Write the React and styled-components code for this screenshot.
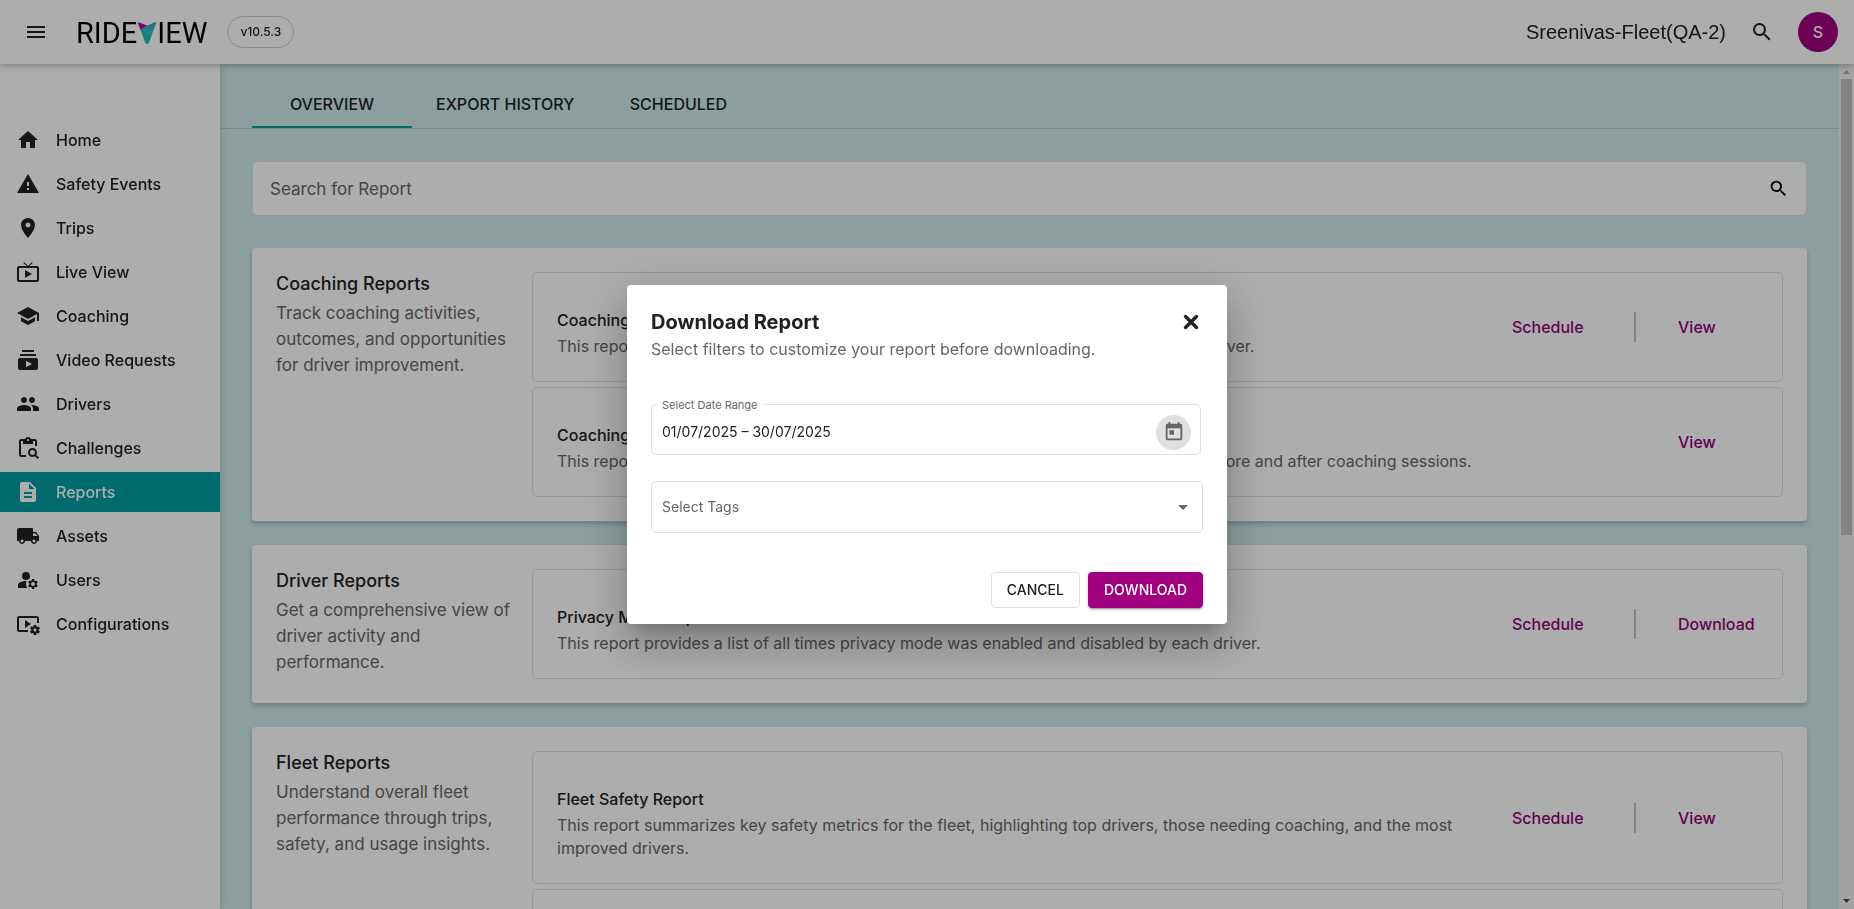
import React from "react";
import styled, { createGlobalStyle, css } from "styled-components";
import {
  MdMenu, MdSearch, MdHome, MdWarning, MdLocationOn, MdLiveTv, MdSchool,
  MdSubscriptions, MdPeople, MdContentPasteSearch, MdDescription,
  MdLocalShipping, MdManageAccounts, MdVideoSettings, MdToday, MdArrowDropDown,
} from "react-icons/md";

const color = {
  teal: "#009c9f",
  pale: "#ceebeb",
  purple: "#a00080",
  link: "#940076",
  text: "#212121",
  muted: "#666666",
  line: "#e0e0e0",
};

const GlobalStyle = createGlobalStyle`
  *, *::before, *::after { box-sizing: border-box; }
  body {
    margin: 0;
    color: ${color.text};
    font-family: Inter, "Liberation Sans", sans-serif;
    font-size: 16px;
    line-height: 24px;
  }
  button, input, select { font: inherit; color: inherit; }
  h1, h2, h3, p { margin: 0; }
`;

const Page = styled.div`
  display: flex;
  flex-direction: column;
  height: 100vh;
  overflow: hidden;
`;

const Header = styled.header`
  position: relative;
  z-index: 2;
  flex: none;
  display: flex;
  align-items: center;
  height: 64px;
  padding: 0 16px 0 24px;
  background: #fff;
  box-shadow: 0 2px 6px rgba(0, 0, 0, 0.25);
`;

const IconButton = styled.button`
  display: grid;
  place-items: center;
  width: ${(p) => p.$size || 24}px;
  height: ${(p) => p.$size || 24}px;
  padding: 0;
  border: 0;
  border-radius: 50%;
  background: ${(p) => p.$fill || "transparent"};
  color: ${(p) => p.$ink || color.text};
  cursor: pointer;
`;

const Logo = styled.a`
  display: flex;
  align-items: center;
  margin-left: 28px;
  padding-top: 2px;
  color: #000;
  font-family: Roboto, sans-serif;
  font-size: 29px;
  font-weight: 400;
  line-height: 32px;
  text-decoration: none;
`;

const Version = styled.span`
  height: 32px;
  margin-left: 20px;
  padding: 0 12px;
  border: 1px solid #cfcfcf;
  border-radius: 16px;
  font-size: 12px;
  font-weight: 500;
  line-height: 30px;
`;

const Account = styled.div`
  display: flex;
  align-items: center;
  gap: 24px;
  margin-left: auto;
`;

const FleetName = styled.span`
  font-family: "Liberation Sans", Arial, sans-serif;
  font-size: 20px;
`;

const Avatar = styled.button`
  width: 40px;
  height: 40px;
  padding: 0;
  border: 0;
  border-radius: 50%;
  background: ${color.purple};
  color: #fff;
  font-weight: 500;
`;

const Body = styled.div`
  flex: 1;
  min-height: 0;
  display: flex;
`;

const Sidebar = styled.nav`
  position: relative;
  z-index: 1;
  flex: none;
  display: flex;
  flex-direction: column;
  gap: 4px;
  width: 220px;
  padding-top: 56px;
  background: #fff;
  box-shadow: 1px 0 6px rgba(0, 0, 0, 0.16);
`;

const NavItem = styled.a`
  display: flex;
  align-items: center;
  gap: 16px;
  height: 40px;
  padding: 0 16px;
  font-weight: 500;
  text-decoration: none;
  color: ${color.text};
  ${(p) => p.$active && css`
    background: ${color.teal};
    color: #fff;
  `}
`;

const Main = styled.main`
  flex: 1;
  min-width: 0;
  overflow: auto;
  scrollbar-width: none;
  background: ${color.pale};
`;

const Tabs = styled.div`
  display: flex;
  padding: 16px 32px 0;
  border-bottom: 1px solid #b7cccc;
`;

const Tab = styled.button`
  min-width: 160px;
  height: 48px;
  padding: 0 24px;
  border: 0;
  background: none;
  font-weight: 500;
  box-shadow: ${(p) => (p.$active ? `inset 0 -2px ${color.teal}` : "none")};
`;

const Content = styled.div`
  display: flex;
  flex-direction: column;
  gap: 24px;
  padding: 32px;
`;

const SearchBox = styled.form`
  display: flex;
  align-items: center;
  height: 55px;
  margin-bottom: 8px;
  padding: 0 16px 0 17px;
  border: 1px solid ${color.line};
  border-radius: 5px;
  background: #fff;
`;

const SearchInput = styled.input`
  flex: 1;
  min-width: 0;
  padding: 0;
  border: 0;
  outline: 0;
  background: none;
  font-size: 17px;
  &::placeholder { color: ${color.muted}; opacity: 1; }
`;

const Card = styled.section`
  display: flex;
  gap: 16px;
  padding: 24px;
  border-radius: 4px;
  background: #fff;
  box-shadow: 0 3px 5px rgba(0, 0, 0, 0.2);
`;

const CardIntro = styled.div`
  flex: none;
  width: 240px;
`;

const CardTitle = styled.h2`
  font-size: 18px;
  font-weight: 500;
  line-height: 24px;
`;

const CardText = styled.p`
  margin-top: 4px;
  color: ${color.muted};
  font-size: 17px;
  line-height: 26px;
`;

const ReportList = styled.div`
  flex: 1;
  min-width: 0;
  display: flex;
  flex-direction: column;
  gap: 5px;
`;

const Report = styled.article`
  display: grid;
  grid-template-columns: minmax(0, 1fr) 122px 2px 146px;
  align-items: center;
  border: 1px solid ${color.line};
  border-radius: 5px;
`;

const ReportText = styled.div`
  grid-column: 1;
  padding: 35px 24px 23px;
`;

const ReportTitle = styled.h3`
  font-size: 16px;
  font-weight: 500;
  line-height: 24px;
`;

const ReportDescription = styled.p`
  margin-top: 3px;
  color: ${color.muted};
  line-height: 23px;
`;

const Action = styled.a`
  grid-column: ${(p) => p.$column};
  padding-left: ${(p) => (p.$column === 4 ? 42 : 0)}px;
  color: ${color.link};
  font-weight: 500;
  text-decoration: none;
`;

const Divider = styled.span`
  grid-column: 3;
  height: 30px;
  background: #c4c4c4;
`;

const Scrollbar = styled.div`
  flex: none;
  display: flex;
  flex-direction: column;
  align-items: center;
  width: 15px;
  background: #f1f1f1;
`;

const ScrollArrow = styled.svg`
  flex: none;
  width: 15px;
  height: 15px;
`;

const ScrollTrack = styled.div`
  flex: 1;
  width: 11px;
`;

const ScrollThumb = styled.div`
  height: 56%;
  background: #c1c1c1;
`;

const Backdrop = styled.div`
  position: fixed;
  inset: 0;
  z-index: 10;
  display: grid;
  place-items: center;
  background: rgba(0, 0, 0, 0.32);
`;

const Dialog = styled.form`
  width: 600px;
  max-width: calc(100% - 64px);
  padding: 24px 24px 16px;
  border-radius: 4px;
  background: #fff;
  box-shadow: 0 11px 15px -7px rgba(0, 0, 0, 0.2), 0 24px 38px 3px rgba(0, 0, 0, 0.14),
    0 9px 46px 8px rgba(0, 0, 0, 0.12);
`;

const DialogHead = styled.div`
  display: flex;
  align-items: center;
  justify-content: space-between;
`;

const DialogTitle = styled.h1`
  font-size: 20px;
  font-weight: 700;
  line-height: 26px;
`;

const DialogText = styled.p`
  margin-top: 2px;
  color: ${color.muted};
`;

const DateField = styled.div`
  position: relative;
  display: flex;
  align-items: center;
  height: 51px;
  margin: 43px 2px 26px 0;
  padding: 5px 9px 0 10px;
  border: 1px solid ${color.line};
  border-radius: 5px;
`;

const FloatingLabel = styled.label`
  position: absolute;
  top: -8px;
  left: 5px;
  padding: 0 5px;
  background: #fff;
  color: ${color.muted};
  font-size: 11px;
  line-height: 16px;
`;

const DateInput = styled.input`
  flex: 1;
  min-width: 0;
  padding: 0;
  border: 0;
  outline: 0;
  font-size: 14px;
`;

const TagField = styled.div`
  display: flex;
  align-items: center;
  height: 52px;
  border: 1px solid ${color.line};
  border-radius: 5px;
  color: ${color.muted};
`;

const TagSelect = styled.select`
  flex: 1;
  height: 50px;
  margin-right: -31px;
  padding: 0 32px 0 10px;
  border: 0;
  outline: 0;
  appearance: none;
  background: none;
  font-size: 14px;
`;

const SelectArrow = styled(MdArrowDropDown)`
  flex: none;
  margin-right: 7px;
  pointer-events: none;
`;

const DialogActions = styled.div`
  display: flex;
  justify-content: flex-end;
  gap: 8px;
  margin-top: 39px;
`;

const Button = styled.button`
  height: 36px;
  padding: 0 15px;
  border: 1px solid ${(p) => (p.$primary ? color.purple : color.line)};
  border-radius: 4px;
  background: ${(p) => (p.$primary ? color.purple : "#fff")};
  color: ${(p) => (p.$primary ? "#fff" : color.text)};
  font-size: 14px;
  font-weight: 500;
  box-shadow: ${(p) => (p.$primary
    ? "0 3px 1px -2px rgba(0,0,0,.2), 0 2px 2px rgba(0,0,0,.14), 0 1px 5px rgba(0,0,0,.12)"
    : "none")};
`;

const navigation = [
  ["Home", MdHome],
  ["Safety Events", MdWarning],
  ["Trips", MdLocationOn],
  ["Live View", MdLiveTv],
  ["Coaching", MdSchool],
  ["Video Requests", MdSubscriptions],
  ["Drivers", MdPeople],
  ["Challenges", MdContentPasteSearch],
  ["Reports", MdDescription],
  ["Assets", MdLocalShipping],
  ["Users", MdManageAccounts],
  ["Configurations", MdVideoSettings],
];

const sections = [
  {
    title: "Coaching Reports",
    text: "Track coaching activities, outcomes, and opportunities for driver improvement.",
    reports: [
      {
        title: "Coaching Activity Report",
        text: "This report provides a list of all coaching sessions and their actual outcomes for each driver.",
        schedule: true,
        action: "View",
      },
      {
        title: "Coaching Effectiveness Report",
        text: "This report provides a comparison of all driver performance and driving event trends before and after coaching sessions.",
        action: "View",
      },
    ],
  },
  {
    title: "Driver Reports",
    text: "Get a comprehensive view of driver activity and performance.",
    reports: [
      {
        title: "Privacy Mode Report",
        text: "This report provides a list of all times privacy mode was enabled and disabled by each driver.",
        schedule: true,
        action: "Download",
      },
    ],
  },
  {
    title: "Fleet Reports",
    text: "Understand overall fleet performance through trips, safety, and usage insights.",
    reports: [
      {
        title: "Fleet Safety Report",
        text: "This report summarizes key safety metrics for the fleet, highlighting top drivers, those needing coaching, and the most improved drivers.",
        schedule: true,
        action: "View",
      },
      {
        title: "Fleet Usage Report",
        text: "This report summarizes fleet usage across all trips.",
        schedule: true,
        action: "View",
      },
    ],
  },
];

function LogoMark() {
  return (
    <svg width="20" height="24" viewBox="0 0 20 24" aria-hidden="true">
      <defs>
        <linearGradient id="mark" x1="0" y1="0" x2="0" y2="1">
          <stop offset="0" stopColor="#3f9fd0" />
          <stop offset="0.45" stopColor="#35bcc6" />
          <stop offset="1" stopColor="#13c29a" />
        </linearGradient>
      </defs>
      <path d="M3 7.5 18 1.2Q19.5 .8 19 2.4L12 21.4Q10 24.4 8.2 21.4Z" fill="url(#mark)" />
      <path d="M1 2.6Q.6 1 2.4 1.6L10 4.6 3.4 8.4Z" fill="#b800b0" />
    </svg>
  );
}

function CloseMark() {
  return (
    <svg width="24" height="24" viewBox="0 0 24 24" aria-hidden="true">
      <path d="M6.5 6.5 17.5 17.5M17.5 6.5 6.5 17.5" stroke="#212121" strokeWidth="3.4" strokeLinecap="round" />
    </svg>
  );
}

function ReportRow({ report }) {
  return (
    <Report>
      <ReportText>
        <ReportTitle>{report.title}</ReportTitle>
        <ReportDescription>{report.text}</ReportDescription>
      </ReportText>
      {report.schedule && <Action href="#schedule" $column={2}>Schedule</Action>}
      {report.schedule && <Divider />}
      <Action href="#open" $column={4}>{report.action}</Action>
    </Report>
  );
}

export default function App() {
  return (
    <>
      <GlobalStyle />
      <Page>
        <Header>
          <IconButton type="button" aria-label="Menu"><MdMenu size={24} /></IconButton>
          <Logo href="#home" aria-label="RideView">
            <span>RIDE</span>
            <LogoMark />
            <span>IEW</span>
          </Logo>
          <Version>v10.5.3</Version>
          <Account>
            <FleetName>Sreenivas-Fleet(QA-2)</FleetName>
            <IconButton type="button" aria-label="Search"><MdSearch size={24} /></IconButton>
            <Avatar type="button">S</Avatar>
          </Account>
        </Header>
        <Body>
          <Sidebar>
            {navigation.map(([label, Icon]) => (
              <NavItem key={label} href="#page" $active={label === "Reports"}>
                <Icon size={24} />
                {label}
              </NavItem>
            ))}
          </Sidebar>
          <Main>
            <Tabs role="tablist">
              <Tab type="button" role="tab" aria-selected="true" $active>OVERVIEW</Tab>
              <Tab type="button" role="tab">EXPORT HISTORY</Tab>
              <Tab type="button" role="tab">SCHEDULED</Tab>
            </Tabs>
            <Content>
              <SearchBox>
                <SearchInput aria-label="Search for Report" placeholder="Search for Report" />
                <IconButton type="button" aria-label="Search reports" $ink="#000"><MdSearch size={21} /></IconButton>
              </SearchBox>
              {sections.map((section) => (
                <Card key={section.title}>
                  <CardIntro>
                    <CardTitle>{section.title}</CardTitle>
                    <CardText>{section.text}</CardText>
                  </CardIntro>
                  <ReportList>
                    {section.reports.map((report) => (
                      <ReportRow key={report.title} report={report} />
                    ))}
                  </ReportList>
                </Card>
              ))}
            </Content>
          </Main>
          <Scrollbar aria-hidden="true">
            <ScrollArrow viewBox="0 0 15 15"><path d="M4 10 7.5 6 11 10Z" fill="#a3a3a3" /></ScrollArrow>
            <ScrollTrack><ScrollThumb /></ScrollTrack>
            <ScrollArrow viewBox="0 0 15 15"><path d="M4 5 7.5 9 11 5Z" fill="#505050" /></ScrollArrow>
          </Scrollbar>
        </Body>
      </Page>
      <Backdrop>
        <Dialog role="dialog" aria-modal="true" aria-labelledby="dialog-title">
          <DialogHead>
            <DialogTitle id="dialog-title">Download Report</DialogTitle>
            <IconButton type="button" aria-label="Close"><CloseMark /></IconButton>
          </DialogHead>
          <DialogText>Select filters to customize your report before downloading.</DialogText>
          <DateField>
            <FloatingLabel htmlFor="range">Select Date Range</FloatingLabel>
            <DateInput id="range" type="text" defaultValue="01/07/2025 – 30/07/2025" />
            <IconButton type="button" aria-label="Choose dates" $size={35} $fill="#e0e0e0" $ink="#666">
              <MdToday size={22} />
            </IconButton>
          </DateField>
          <TagField>
            <TagSelect aria-label="Select Tags" defaultValue="">
              <option value="">Select Tags</option>
            </TagSelect>
            <SelectArrow size={24} />
          </TagField>
          <DialogActions>
            <Button type="button">CANCEL</Button>
            <Button type="button" $primary>DOWNLOAD</Button>
          </DialogActions>
        </Dialog>
      </Backdrop>
    </>
  );
}
